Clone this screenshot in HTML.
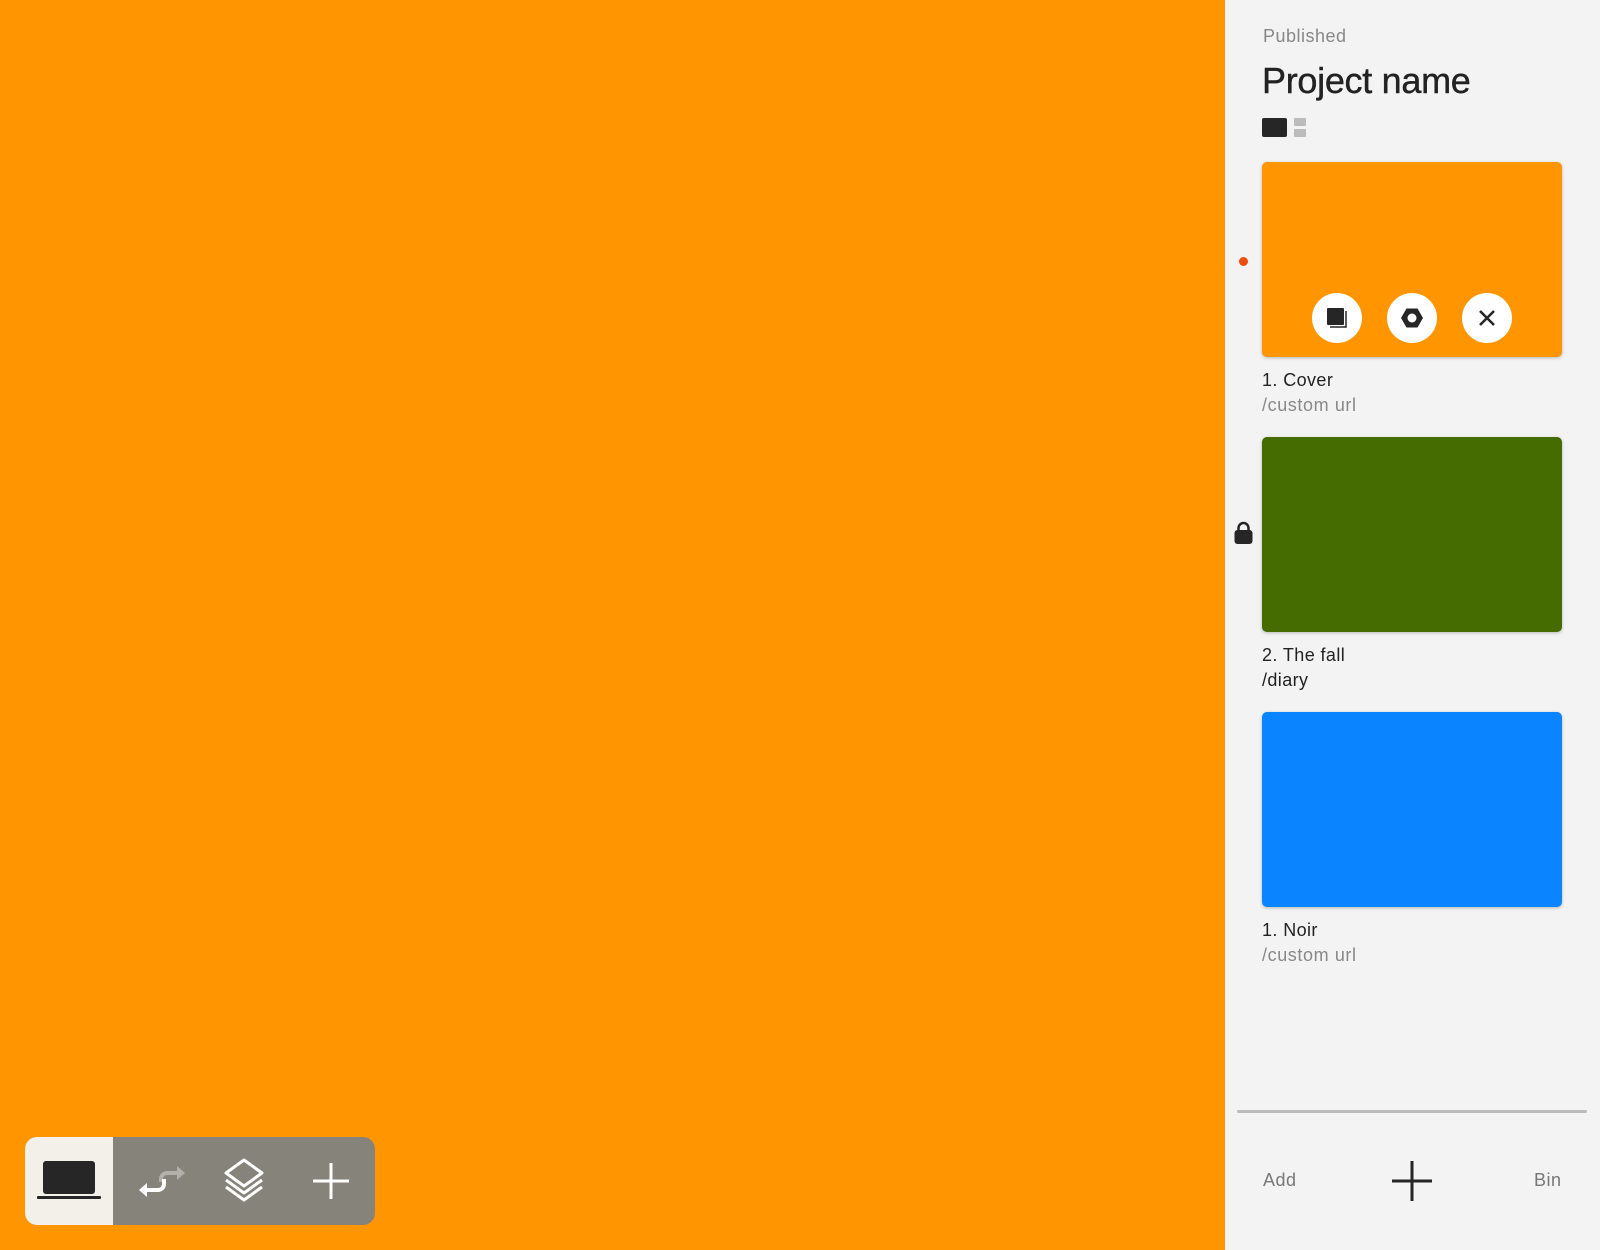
<!DOCTYPE html>
<html><head><meta charset="utf-8"><style>
*{margin:0;padding:0;box-sizing:border-box}
body{width:1600px;height:1250px;background:#ff9500;position:relative;overflow:hidden;font-family:"Liberation Sans",sans-serif}
.panel{position:absolute;left:1225px;top:0;width:375px;height:1250px;background:#f3f3f3}
.a{position:absolute}
.card{position:absolute;left:1262px;width:300px;height:195px;border-radius:5px;box-shadow:0 1px 3px rgba(0,0,0,.25)}
.t1{font-size:18px;color:#222;letter-spacing:0.4px}
.t2{font-size:18px;color:#888;letter-spacing:0.6px}
.btn{position:absolute;top:293px;width:50px;height:50px;border-radius:50%;background:#fff;display:flex;align-items:center;justify-content:center}
</style></head><body>
<div class="panel"></div>
<div class="a" style="left:1263px;top:26px;font-size:18px;color:#888;letter-spacing:0.5px">Published</div>
<div class="a" style="left:1262px;top:60px;font-size:36px;color:#222;letter-spacing:-0.3px;-webkit-text-stroke:0.4px #222">Project name</div>
<div class="a" style="left:1262px;top:118px;width:25px;height:19px;background:#262626;border-radius:2px"></div>
<div class="a" style="left:1294px;top:118px;width:12px;height:8px;background:#bbb;border-radius:1px"></div>
<div class="a" style="left:1294px;top:129px;width:12px;height:8px;background:#bbb;border-radius:1px"></div>

<div class="card" style="top:162px;background:#ff9500"></div>
<div class="btn" style="left:1312px"><svg width="26" height="26" viewBox="0 0 26 26"><rect x="3" y="3" width="17" height="17" rx="1" fill="#262626"/><path d="M22 6v16H6" stroke="#262626" stroke-width="1.5" fill="none"/></svg></div>
<div class="btn" style="left:1387px"><svg width="26" height="26" viewBox="0 0 26 26"><path d="M7.5 3.5h11L24 13l-5.5 9.5h-11L2 13z" fill="#262626"/><circle cx="13" cy="13" r="4.5" fill="#fff"/></svg></div>
<div class="btn" style="left:1462px"><svg width="22" height="22" viewBox="0 0 22 22"><path d="M4 4L18 18M18 4L4 18" stroke="#262626" stroke-width="2.6"/></svg></div>
<div class="a" style="left:1239px;top:257px;width:9px;height:9px;border-radius:50%;background:#f04e0c"></div>
<div class="a t1" style="left:1262px;top:370px">1. Cover</div>
<div class="a t2" style="left:1262px;top:395px">/custom url</div>

<div class="card" style="top:437px;background:#446c00"></div>
<svg class="a" style="left:1234px;top:521px" width="19" height="23" viewBox="0 0 19 23"><path d="M4.5 10V7a5 5 0 0 1 10 0v3" stroke="#262626" stroke-width="2.5" fill="none"/><rect x="0.5" y="9" width="18" height="14" rx="3" fill="#262626"/></svg>
<div class="a t1" style="left:1262px;top:645px">2. The fall</div>
<div class="a t1" style="left:1262px;top:670px">/diary</div>

<div class="card" style="top:712px;background:#0a84ff"></div>
<div class="a t1" style="left:1262px;top:920px">1. Noir</div>
<div class="a t2" style="left:1262px;top:945px">/custom url</div>

<div class="a" style="left:1237px;top:1110px;width:350px;height:3px;background:#bbb;border-radius:2px"></div>
<div class="a" style="left:1263px;top:1170px;font-size:18px;color:#777;letter-spacing:0.5px">Add</div>
<svg class="a" style="left:1391px;top:1160px" width="42" height="42" viewBox="0 0 42 42"><path d="M21 1v40M1 21h40" stroke="#262626" stroke-width="3"/></svg>
<div class="a" style="left:1534px;top:1170px;font-size:18px;color:#777;letter-spacing:0.5px">Bin</div>

<div class="a" style="left:25px;top:1137px;width:350px;height:88px;border-radius:12px;background:#86837b;overflow:hidden">
<div class="a" style="left:0;top:0;width:88px;height:88px;background:#f3f0ea"></div>
<svg class="a" style="left:12px;top:24px" width="64" height="40" viewBox="0 0 64 40"><rect x="6" y="0" width="52" height="33" rx="3" fill="#262626"/><rect x="0" y="35" width="64" height="3" rx="1" fill="#262626"/></svg>
<svg class="a" style="left:112px;top:24px" width="54" height="40" viewBox="0 0 54 40"><path d="M24 21v-3a6 6 0 0 1 6-6h10" stroke="#b3b0aa" stroke-width="4" fill="none"/><path d="M40 5l8 7-8 7z" fill="#b3b0aa"/><path d="M27 18v5a6 6 0 0 1-6 6H10" stroke="#fff" stroke-width="4" fill="none"/><path d="M10 22l-8 7 8 7z" fill="#fff"/></svg>
<svg class="a" style="left:198px;top:21px" width="42" height="46" viewBox="0 0 42 46"><path d="M21 2L39 15 21 28 3 15z" stroke="#fff" stroke-width="3" fill="none" stroke-linejoin="round"/><path d="M3 22l18 13 18-13M3 29l18 13 18-13" stroke="#fff" stroke-width="3" fill="none" stroke-linejoin="round"/></svg>
<svg class="a" style="left:287px;top:25px" width="38" height="38" viewBox="0 0 38 38"><path d="M19 1v36M1 19h36" stroke="#fff" stroke-width="3"/></svg>
</div>
</body></html>
